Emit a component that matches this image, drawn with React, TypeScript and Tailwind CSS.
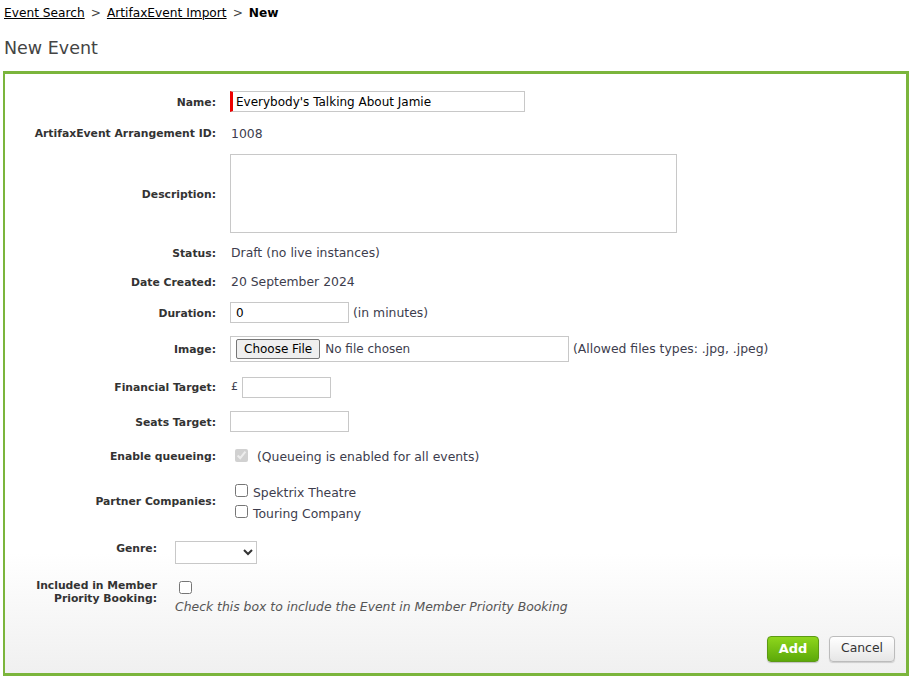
import { useState } from "react";

// Label column for the main table
function Row({
  label,
  h,
  children,
}: {
  label: string;
  h: string;
  children: React.ReactNode;
}) {
  return (
    <div className={`flex items-center ${h}`}>
      <div className="w-[211px] shrink-0 pt-[3px] text-right text-[10.8px] font-bold text-[#333]">
        {label}
      </div>
      <div className="ml-[14px] flex items-center text-[12.4px] text-[#3d3d4d]">{children}</div>
    </div>
  );
}

export default function App() {
  const [name, setName] = useState("Everybody's Talking About Jamie");
  const [duration, setDuration] = useState("0");

  const boxCls = "h-[21px] border border-[#c8c8c8] bg-white px-[5px] text-[12px] text-black outline-none";

  return (
    <div className="h-[680px] w-[912px] bg-white font-['DejaVu_Sans',sans-serif] text-[#333]">
      {/* Breadcrumb */}
      <div className="flex h-[26px] items-center gap-[6px] pl-[4px] text-[12.2px] text-black">
        <a className="underline">Event Search</a>
        <span className="text-[#444]">&gt;</span>
        <a className="underline">ArtifaxEvent Import</a>
        <span className="text-[#444]">&gt;</span>
        <span className="font-bold">New</span>
      </div>

      <h1 className="flex h-[45px] items-center pl-[4px] pb-[1px] text-[17.5px] text-[#444]">New Event</h1>

      {/* Frame */}
      <div className="ml-[3px] mr-[3px] h-[605px] border-[3px] border-l-2 border-[#7bb53c] bg-[linear-gradient(to_bottom,#fff_80%,#f0f0f0)]">
        <div className="pt-[12px]">
          <Row label="Name:" h="h-[31px]">
            <input
              value={name}
              onChange={(e) => setName(e.target.value)}
              className={`${boxCls} w-[295px] border-l-[3px] border-l-[#e00] pl-[3px]`}
            />
          </Row>
          <Row label="ArtifaxEvent Arrangement ID:" h="h-[32px]">
            <span className="pl-[1px] pt-[2px]">1008</span>
          </Row>
          <Row label="Description:" h="h-[89px]">
            <textarea className="h-[79px] w-[447px] resize-none border border-[#c8c8c8] bg-white outline-none" />
          </Row>
          <Row label="Status:" h="h-[29px]">
            <span className="pl-[1px] pt-[2px]">Draft (no live instances)</span>
          </Row>
          <Row label="Date Created:" h="h-[29px]">
            <span className="pl-[1px] pt-[2px]">20 September 2024</span>
          </Row>
          <Row label="Duration:" h="h-[33px]">
            <input
              value={duration}
              onChange={(e) => setDuration(e.target.value)}
              className={`${boxCls} w-[119px]`}
            />
            <span className="ml-[4px] pt-[1px]">(in minutes)</span>
          </Row>
          <Row label="Image:" h="h-[40px]">
            <div className="flex h-[26px] w-[339px] items-center border border-[#c8c8c8] bg-white px-[5px]">
              <input
                type="file"
                className="w-full text-[12px] text-[#3d3d4d] file:mr-[5px] file:h-[20px] file:rounded-[2px] file:border file:border-[#767676] file:bg-[#efefef] file:px-[7px] file:text-[12px] file:text-black"
              />
            </div>
            <span className="ml-[4px] pt-[1px]">(Allowed files types: .jpg, .jpeg)</span>
          </Row>
          <Row label="Financial Target:" h="h-[36px]">
            <span className="pl-[1px] text-[11px]">£</span>
            <input className={`${boxCls} ml-[4px] w-[89px]`} />
          </Row>
          <Row label="Seats Target:" h="h-[33px]">
            <input className={`${boxCls} w-[119px]`} />
          </Row>
          <Row label="Enable queueing:" h="h-[35px]">
            <input type="checkbox" checked disabled readOnly className="ml-[5px] h-[13px] w-[13px]" />
            <span className="ml-[9px] pt-[3px]">(Queueing is enabled for all events)</span>
          </Row>
          <Row label="Partner Companies:" h="h-[55px]">
            <div className="flex flex-col pl-[5px]">
              <label className="flex h-[21px] items-start gap-[5px]">
                <input type="checkbox" className="mt-[4px] h-[13px] w-[13px]" />
                <span className="mt-[6px] leading-[14px]">Spektrix Theatre</span>
              </label>
              <label className="flex h-[21px] items-start gap-[5px]">
                <input type="checkbox" className="mt-[4px] h-[13px] w-[13px]" />
                <span className="mt-[6px] leading-[14px]">Touring Company</span>
              </label>
            </div>
          </Row>
        </div>

        {/* Second table */}
        <div className="pt-[12px]">
          <div className="flex items-start">
            <div className="w-[152px] shrink-0 pt-[2px] text-right text-[10.8px] leading-[13px] font-bold text-[#333]">
              Genre:
            </div>
            <select className="ml-[18px] mt-[1px] h-[23px] w-[82px] border border-[#c8c8c8] bg-white text-[12px]">
              <option></option>
            </select>
          </div>
          <div className="mt-[14px] flex items-start">
            <div className="w-[152px] shrink-0 pt-[1px] text-right text-[10.8px] leading-[13px] font-bold text-[#333]">
              Included in Member
              <br />
              Priority Booking:
            </div>
            <div className="ml-[18px] flex flex-col">
              <input type="checkbox" className="ml-[4px] mt-[3px] h-[13px] w-[13px]" />
              <span className="mt-[4px] text-[12.4px] italic text-[#555]">
                Check this box to include the Event in Member Priority Booking
              </span>
            </div>
          </div>
        </div>

        {/* Actions */}
        <div className="mt-[19px] flex justify-end gap-[10px] pr-[11px]">
          <button className="h-[26px] w-[52px] rounded-[4px] border border-[#5c9a14] bg-[linear-gradient(to_bottom,#8ed61c,#5ca90a)] text-[13px] font-bold text-white shadow-[0_1px_1px_rgba(0,0,0,0.2)]">
            Add
          </button>
          <button className="h-[26px] w-[66px] rounded-[4px] border border-[#bcbcbc] bg-[linear-gradient(to_bottom,#fff,#e6e6e6)] text-[12.4px] text-[#333] shadow-[0_1px_1px_rgba(0,0,0,0.15)]">
            Cancel
          </button>
        </div>
      </div>
    </div>
  );
}
